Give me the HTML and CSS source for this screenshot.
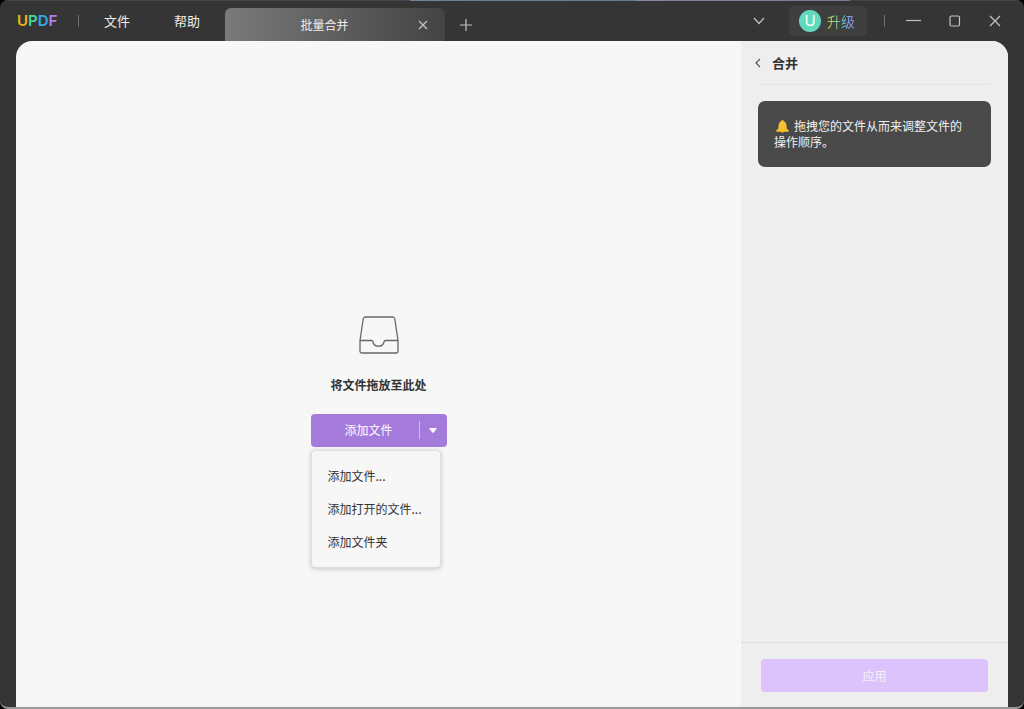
FILE: index.html
```html
<!DOCTYPE html>
<html lang="zh-CN">
<head>
<meta charset="utf-8">
<title>UPDF</title>
<link rel="stylesheet" href="styles.css">
</head>
<body>
<div class="window">
  <header class="titlebar">
    <div class="brand" aria-label="UPDF"><span class="brand-u">U</span><span class="brand-p">P</span><span class="brand-d">D</span><span class="brand-f">F</span></div>
    <span class="divider"></span>
    <nav class="menubar">
      <button class="menubar-item" type="button">文件</button>
      <button class="menubar-item" type="button">帮助</button>
    </nav>
    <div class="tab">
      <span class="tab-title">批量合并</span>
      <button class="icon-button tab-close" type="button" aria-label="关闭标签">
        <svg width="10" height="10" viewBox="0 0 10 10"><path d="M1 1l8 8M9 1l-8 8"/></svg>
      </button>
    </div>
    <button class="icon-button tab-add" type="button" aria-label="新建标签">
      <svg width="12" height="12" viewBox="0 0 12 12"><path d="M6 0v12M0 6h12"/></svg>
    </button>
    <div class="window-tools">
      <button class="icon-button" type="button" aria-label="标签列表">
        <svg width="12" height="8" viewBox="0 0 12 8"><path d="M1 1l5 5.500 5-5.500"/></svg>
      </button>
      <button class="upgrade" type="button"><span class="avatar">U</span><span class="upgrade-label">升级</span></button>
      <span class="divider"></span>
      <div class="window-controls">
        <button class="icon-button" type="button" aria-label="最小化">
          <svg width="15" height="12" viewBox="0 0 15 12"><path d="M0 5.500h15"/></svg>
        </button>
        <button class="icon-button" type="button" aria-label="最大化">
          <svg width="12" height="12" viewBox="0 0 12 12"><rect x="1" y="1" width="9.500" height="10" rx="1.500"/></svg>
        </button>
        <button class="icon-button" type="button" aria-label="关闭">
          <svg width="12" height="12" viewBox="0 0 12 12"><path d="M1 1l10 10M11 1L1 11"/></svg>
        </button>
      </div>
    </div>
  </header>

  <div class="workspace">
    <main class="dropzone">
      <svg class="tray" width="40" height="38" viewBox="0 0 40 38"><path d="M6.500 1h27q2 0 2.300 2L39 24.500V35q0 2-2 2H3q-2 0-2-2V24.500L4.200 3q.3-2 2.300-2zM1 24.500h11.500q1.300 0 1.500 1.500a5.600 5.200 0 0 0 11 0q.2-1.500 1.500-1.500H39"/></svg>
      <p class="drop-title">将文件拖放至此处</p>
      <div class="split">
        <button class="split-main" type="button">添加文件</button>
        <button class="split-toggle" type="button" aria-label="更多选项">
          <svg width="8" height="5" viewBox="0 0 8 5"><path d="M1 0h6q1 0 .5 1L4.700 4.500q-.7.700-1.400 0L.5 1Q0 0 1 0z"/></svg>
        </button>
        <div class="menu" role="menu">
          <button class="menu-item" type="button" role="menuitem">添加文件...</button>
          <button class="menu-item" type="button" role="menuitem">添加打开的文件...</button>
          <button class="menu-item" type="button" role="menuitem">添加文件夹</button>
        </div>
      </div>
    </main>

    <aside class="panel">
      <div class="panel-body">
        <div class="panel-head">
          <button class="icon-button back" type="button" aria-label="返回">
            <svg width="6" height="10" viewBox="0 0 6 10"><path d="M5 1L1 5l4 4"/></svg>
          </button>
          <h1 class="panel-title">合并</h1>
        </div>
        <p class="tip"><svg class="bell" width="13" height="13" viewBox="0 0 13 13"><path class="bell-clapper" d="M5 11h3q0 2-1.500 2T5 11z"/><path class="bell-body" d="M6.500 0q1 0 1.100 1 2.600.8 2.800 4l.3 3.500 2.100 2q.5 1.300-.8 1.300H1q-1.300 0-.8-1.300l2.100-2L2.600 5q.2-3.200 2.800-4 .1-1 1.100-1z"/></svg>拖拽您的文件从而来调整文件的<br>操作顺序。</p>
      </div>
      <div class="panel-foot">
        <button class="apply" type="button">应用</button>
      </div>
    </aside>
  </div>
</div>
</body>
</html>
```

FILE: styles.css
```css
* {
  box-sizing: border-box;
}

body {
  margin: 0;
  background: #000;
  color: #333;
  font-family: "Noto Sans CJK SC", sans-serif;
  font-size: 12px;
  line-height: 16px;
}

button {
  border: 0;
  padding: 0;
  background: none;
  color: inherit;
  font: inherit;
}

svg {
  display: block;
  flex: none;
  fill: none;
  stroke: currentColor;
}

.window {
  display: flex;
  flex-direction: column;
  min-height: 100vh;
  padding: 1px 16px 0;
  border-bottom: 2px solid #999;
  border-radius: 8px;
  background: linear-gradient(90deg, #42444b 40%, #6f8496 40%, #66788c 62%, #8587a0 62%, #77798c 83%, #42444b 83%) top / 100% 1px no-repeat #353535;
}

.titlebar {
  display: flex;
  align-items: center;
  height: 40px;
  color: #eee;
}

.brand {
  width: 62px;
  padding-left: 1px;
  font-family: Inter, sans-serif;
  font-size: 15px;
  font-weight: 600;
}

.brand-u { color: #f0b914; }
.brand-p { color: #42d99b; }
.brand-d { color: #35a5e8; }
.brand-f { color: #b47cf0; }

.divider {
  flex: none;
  width: 1px;
  height: 12px;
  background: #707070;
}

.menubar {
  display: flex;
  gap: 44px;
  padding: 0 25px;
  font-size: 13px;
}

.tab {
  display: flex;
  align-items: center;
  align-self: flex-end;
  width: 220px;
  height: 33px;
  padding: 0 17px 0 6px;
  border-radius: 6px 6px 0 0;
  background: linear-gradient(90deg, #7a7a7a, #434343);
}

.tab-title {
  flex: 1;
  text-align: center;
}

.icon-button {
  display: grid;
  place-items: center;
  color: #c4c4c4;
  stroke-width: 1.2;
}

.tab-close,
.tab-add {
  height: 33px;
}

.tab-add {
  align-self: flex-end;
  margin-left: 15px;
}

.window-tools {
  display: flex;
  align-items: center;
  margin-left: auto;
}

.upgrade {
  display: flex;
  align-items: center;
  gap: 6px;
  height: 30px;
  margin: 0 17px 0 24px;
  padding: 0 12px 0 10px;
  border-radius: 5px;
  background: #3f3f3f;
}

.avatar {
  display: grid;
  place-items: center;
  width: 22px;
  height: 22px;
  border-radius: 50%;
  background: #61d9bd;
  color: #fff;
  font-family: Inter, sans-serif;
  font-size: 15px;
}

.upgrade-label {
  background: linear-gradient(90deg, #d5c940, #63c9a5 45%, #69b8e8 65%, #a582e8);
  background-clip: text;
  color: transparent;
  font-size: 14px;
}

.window-controls {
  display: flex;
  gap: 28px;
  padding: 0 7px 0 21px;
}

.workspace {
  display: flex;
  flex: 1;
  overflow: hidden;
  border-radius: 16px 16px 0 0;
  background: #f7f7f7;
}

.dropzone {
  display: flex;
  flex: 1;
  flex-direction: column;
  align-items: center;
  justify-content: center;
  padding-top: 14px;
}

.tray {
  color: #686868;
  stroke-width: 1.3;
}

.drop-title {
  margin: 23px 0 21px;
  font-weight: 700;
}

.split {
  position: relative;
  display: flex;
  align-items: center;
  width: 136px;
  height: 33px;
  border-radius: 4px;
  background: #a47bda;
  color: #fff;
}

.split-main {
  flex: 1;
  height: 18px;
  padding-left: 8px;
  border-right: 1px solid #d1bded;
}

.split-toggle {
  display: grid;
  place-items: center;
  width: 27px;
  height: 33px;
}

.split-toggle svg {
  fill: #fff;
  stroke: none;
}

.menu {
  position: absolute;
  top: 36px;
  left: 0;
  width: 130px;
  padding: 9px 0 8px;
  border: 1px solid #dedede;
  border-radius: 4px;
  background: #f7f7f7;
  box-shadow: 0 1px 5px rgba(0, 0, 0, 0.2);
  color: #333;
}

.menu-item {
  display: block;
  width: 100%;
  height: 33px;
  padding: 0 16px;
  text-align: left;
}

.panel {
  display: flex;
  flex-direction: column;
  width: 267px;
  background: #eee;
}

.panel-body {
  flex: 1;
  padding: 0 17px;
}

.panel-head {
  display: flex;
  align-items: center;
  gap: 11px;
  height: 44px;
  border-bottom: 1px solid #e4e4e4;
}

.back {
  margin-left: -3px;
  color: #555;
}

.panel-title {
  margin: 0;
  font-size: 13px;
  font-weight: 700;
}

.tip {
  margin: 16px 0 0;
  padding: 17px 16px;
  border-radius: 7px;
  background: #494949;
  color: #f2f2f2;
  white-space: nowrap;
}

.bell {
  display: inline-block;
  margin: 0 5px 0 2px;
  stroke: none;
  vertical-align: -2px;
}

.bell-body { fill: #fbc02d; }
.bell-clapper { fill: #ed8c24; }

.panel-foot {
  padding: 16px 20px 15px;
  border-top: 1px solid #ddd;
}

.apply {
  display: block;
  width: 100%;
  height: 33px;
  border-radius: 4px;
  background: #dcc3fb;
  color: #f8f0ff;
}
```
